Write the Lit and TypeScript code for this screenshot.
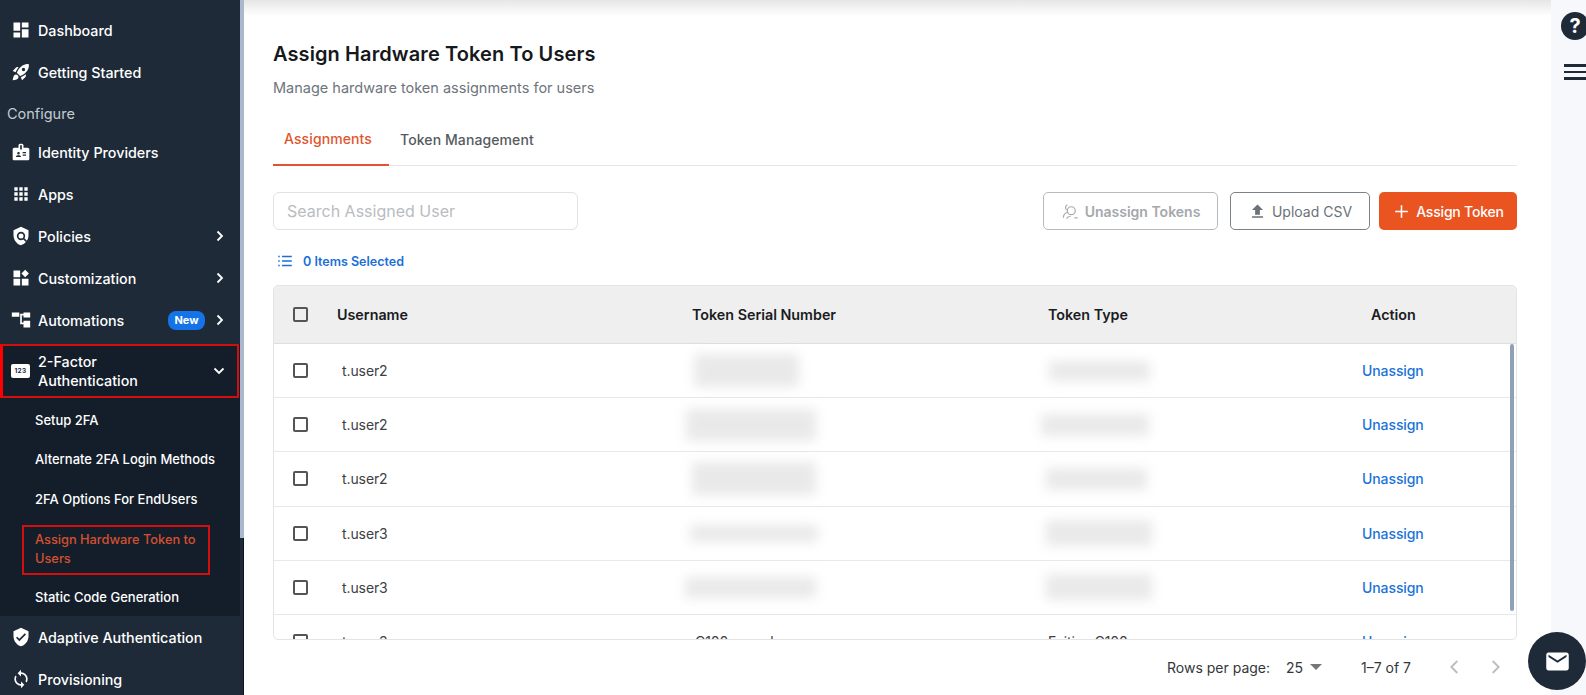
import { LitElement, html, css } from "lit";
import { customElement } from "lit/decorators.js";

const P: Record<string, string> = {
  dashboard: "M3 13h8V3H3v10zm0 8h8v-6H3v6zm10 0h8V11h-8v10zm0-18v6h8V3h-8z",
  rocket: "M9.19 6.35c-2.04 2.29-3.44 5.58-3.57 5.89L2 10.69l4.05-4.05c.47-.47 1.15-.68 1.81-.55l1.33.26zM11.17 17s3.74-1.55 5.89-3.7c5.4-5.4 4.5-9.62 4.21-10.57-.95-.3-5.17-1.19-10.57 4.21C8.55 9.09 7 12.83 7 12.83L11.17 17zm6.48-2.19c-2.29 2.04-5.58 3.44-5.89 3.57L13.31 22l4.05-4.05c.47-.47.68-1.15.55-1.81l-.26-1.33zM9 18c0 .83-.34 1.58-.88 2.12C6.94 21.3 2 22 2 22s.7-4.94 1.88-6.12C4.42 15.34 5.17 15 6 15c1.66 0 3 1.34 3 3zm4-9c0-1.1.9-2 2-2s2 .9 2 2-.9 2-2 2-2-.9-2-2z",
  badge: "M20 7h-5V4c0-1.1-.9-2-2-2h-2c-1.1 0-2 .9-2 2v3H4c-1.1 0-2 .9-2 2v11c0 1.1.9 2 2 2h16c1.1 0 2-.9 2-2V9c0-1.1-.9-2-2-2zM9 12c.83 0 1.5.67 1.5 1.5S9.83 15 9 15s-1.5-.67-1.5-1.5S8.17 12 9 12zm3 6H6v-.75c0-1 2-1.5 3-1.5s3 .5 3 1.5V18zm1-9h-2V4h2v5zm5 7.5h-4V15h4v1.5zm0-3h-4V12h4v1.5z",
  apps: "M4 8h4V4H4v4zm6 12h4v-4h-4v4zm-6 0h4v-4H4v4zm0-6h4v-4H4v4zm6 0h4v-4h-4v4zm6-10v4h4V4h-4zm-6 4h4V4h-4v4zm6 6h4v-4h-4v4zm0 6h4v-4h-4v4z",
  policy: "M21 5l-9-4-9 4v6c0 5.55 3.84 10.74 9 12 2.3-.56 4.33-1.9 5.88-3.71l-3.12-3.12c-1.94 1.29-4.58 1.07-6.29-.64-1.95-1.95-1.95-5.12 0-7.07 1.95-1.95 5.12-1.95 7.07 0 1.71 1.71 1.92 4.35.64 6.29l2.9 2.9C20.29 15.69 21 13.38 21 11V5zM12 15a3 3 0 1 0 0-6 3 3 0 0 0 0 6z",
  custom: "M3 3h8v8H3zM3 13h8v8H3zM13 13h8v8h-8zM17 2l4.5 4.5L17 11l-4.5-4.5z",
  auto: "M1 3h9v5H1zM11 4.5h4V3h8v6h-8V6.500h-2V15h2v-2h8v8h-8v-4h-4z",
  shield: "M12 1L3 5v6c0 5.55 3.84 10.74 9 12 5.16-1.26 9-6.45 9-12V5l-9-4zm-2 16l-4-4 1.41-1.41L10 14.17l6.59-6.59L18 9l-8 8z",
  sync: "M12 4V1L8 5l4 4V6c3.31 0 6 2.69 6 6 0 1.01-.25 1.97-.7 2.8l1.46 1.46C19.54 15.03 20 13.57 20 12c0-4.42-3.58-8-8-8zm0 14c-3.31 0-6-2.69-6-6 0-1.01.25-1.97.7-2.8L5.24 7.74C4.46 8.97 4 10.43 4 12c0 4.42 3.58 8 8 8v3l4-4-4-4v3z",
};

const icon = (name: string) => html`<svg class="ico" viewBox="0 0 24 24" fill="#fff"><path d=${P[name]}></path></svg>`;
const chevR = html`<svg class="chev" viewBox="0 0 12 12" fill="none" stroke="#fff" stroke-width="1.8"><path d="M3.5 1.5 8 6l-4.500 4.500"></path></svg>`;
const chevD = html`<svg class="chev" viewBox="0 0 12 12" fill="none" stroke="#fff" stroke-width="1.8"><path d="M1.500 3.500 6 8l4.500-4.500"></path></svg>`;

interface Row { user: string; s: [number, number, number]; t: [number, number, number]; }
const rows: Row[] = [
  { user: "t.user2", s: [2, 105, 33], t: [1, 101, 20] },
  { user: "t.user2", s: [-6, 130, 32], t: [-7, 108, 22] },
  { user: "t.user2", s: [0, 124, 33], t: [-2, 101, 22] },
  { user: "t.user3", s: [-2, 128, 17], t: [-2, 106, 26] },
  { user: "t.user3", s: [-7, 131, 21], t: [-2, 106, 26] },
];

@customElement("app-root")
export class AppRoot extends LitElement {
  static styles = css`
    :host { display: block; width: 1586px; height: 695px; overflow: hidden; font-family: "Inter", "Noto Sans", sans-serif; background: #fff; position: relative; }
    * { box-sizing: border-box; }
    .page { display: grid; grid-template-columns: 244px 1fr 35px; height: 695px; }
    .side { background: #1e2a38; box-shadow: inset -1px 0 0 #0d131a; padding-top: 9px; overflow: hidden; color: #fff; position: relative; }
    .sthumb { position: absolute; right: 0; top: 0; width: 4px; height: 538px; background: #a9b8cd; }
    .item { height: 42px; width: 240px; display: flex; align-items: center; padding-left: 11px; padding-right: 14px; font-size: 14.3px; font-weight: 500; }
    .ico { width: 20px; height: 20px; flex: none; margin-right: 7px; }
    .chev { width: 12px; height: 12px; flex: none; margin-left: auto; }
    .label-cfg { height: 38px; display: flex; align-items: center; padding: 2px 0 0 7px; font-size: 14.5px; color: #c3cad2; }
    .new { background: #1473e6; color: #fff; font-size: 11px; font-weight: 700; height: 19px; width: 37px; border-radius: 8px; display: flex; align-items: center; justify-content: center; margin-left: auto; }
    .new + .chev { margin-left: 9px; }
    .group { background: #141e2b; margin-top: 3px; height: 272px; width: 240px; }
    .tfa { height: 54px; border: 2px solid #d40d0d; border-left: 3px solid #f00; margin-right: 1px; display: flex; align-items: center; padding-left: 8px; padding-right: 12px; font-size: 14.3px; font-weight: 500; line-height: 19px; }
    .chip { width: 19px; height: 14px; background: #fff; border-radius: 2px; color: #1e2a38; font-size: 6.5px; font-weight: 700; display: flex; align-items: center; justify-content: center; margin-right: 8px; flex: none; letter-spacing: 0.3px; }
    .subs { padding-top: 2px; }
    .sub { height: 39.5px; display: flex; align-items: center; padding-left: 35px; font-size: 13px; font-weight: 500; }
    .sub.on { height: 50px; width: 188px; margin: 6px 0 3px 22px; padding: 0 6px 1px 11px; border: 2px solid #d40d0d; color: #d5502f; line-height: 19px; font-size: 12.8px; }

    .main { padding: 0 34px 0 29px; background: linear-gradient(#e6e6e6, #fff 16px); display: flex; flex-direction: column; min-width: 0; }
    h1 { margin: 42px 0 0; font-size: 20px; line-height: 24px; font-weight: 600; color: #16181c; letter-spacing: 0.1px; }
    .subtitle { margin-top: 12px; font-size: 14.5px; line-height: 20px; color: #6e747c; }
    .tabs { margin-top: 18px; display: flex; height: 50px; border-bottom: 1px solid #e6e6e6; font-size: 14px; font-weight: 500; letter-spacing: 0.1px; }
    .tab { padding: 0 11px 4px; display: flex; align-items: center; color: #555a60; height: 50px; }
    .tab.on { color: #e0552e; border-bottom: 2px solid #e0552e; width: 116px; }
    .tools { margin-top: 26px; display: flex; align-items: center; gap: 13px; }
    .search { width: 305px; height: 38px; border: 1px solid #e2e2e2; border-radius: 6px; margin-right: auto; padding-left: 13px; display: flex; align-items: center; font-size: 16px; color: #b9bcc0; }
    .btn { height: 38px; border-radius: 5px; display: flex; align-items: center; justify-content: center; gap: 5px; font-size: 14px; font-weight: 500; flex: none; }
    .btn svg { width: 19px; height: 19px; flex: none; }
    .b1 { width: 175px; border: 1px solid #b7babd; color: #a5a8ac; font-weight: 600; margin-right: -1px; }
    .b2 { width: 140px; border: 1px solid #7b8288; color: #6b7278; margin-right: -4px; font-weight: 400; }
    .b3 { width: 138px; background: #ea5420; color: #fff; letter-spacing: -0.2px; }
    .sel { margin-top: 21px; height: 20px; padding-left: 3px; display: flex; align-items: center; gap: 9px; font-size: 12.5px; font-weight: 600; color: #1a6fd8; }
    .sel svg { width: 18px; height: 18px; }
    .table { margin-top: 14px; height: 355px; border: 1px solid #e4e4e4; border-radius: 5px; overflow: hidden; position: relative; }
    .tr { display: grid; grid-template-columns: 63px 355px 356px 1fr; align-items: center; }
    .thead { height: 58px; background: #efefef; border-bottom: 1px solid #dedede; font-size: 14.3px; font-weight: 600; color: #1a1c1f; }
    .tcell { display: flex; }
    .tt { width: 323px; flex: none; }
    .trow { height: 54.2px; border-bottom: 1px solid #e8e8e8; font-size: 14px; color: #3c4043; letter-spacing: -0.1px; }
    .cb { width: 15px; height: 15px; border: 2px solid #555; border-radius: 2px; margin-left: 19px; }
    .u { padding-left: 5px; }
    .blur { background: #e9e9e9; filter: blur(6px); flex: none; }
    .actcell { display: flex; align-items: center; }
    .un { color: #1a73d8; font-weight: 500; }
    .ft { width: 314px; flex: none; }
    .thumb { position: absolute; right: 2px; top: 58px; width: 4px; height: 267px; background: #8fa1b6; border-radius: 2px; }
    .pager { margin-top: 15px; height: 24px; display: flex; align-items: center; font-size: 14px; color: #33373b; padding-left: 894px; }
    .pager > * { flex: none; }
    .rp { width: 119px; }
    .n { width: 24px; }
    .tri { width: 0; height: 0; border-left: 6px solid transparent; border-right: 6px solid transparent; border-top: 6px solid #777; margin-right: 39px; }
    .rng { width: 85px; }
    .pager svg { width: 16px; height: 16px; }
    .pager svg + svg { margin-left: 26px; }

    .rail { background: #f7f8fb; position: relative; overflow: hidden; padding-top: 12px; padding-left: 10px; }
    .help { width: 28px; height: 28px; border-radius: 50%; background: #1e2a38; color: #fff; display: flex; align-items: center; justify-content: center; font-weight: 700; font-size: 20px; }
    .burger { margin-top: 24px; width: 24px; display: flex; flex-direction: column; gap: 4px; margin-left: 3px; }
    .burger i { height: 2.5px; background: #1e2a38; display: block; }
    .mail { position: absolute; left: 1528px; top: 632px; width: 58px; height: 58px; border-radius: 50%; background: #1e2a38; display: flex; align-items: center; justify-content: center; }
    .mail svg { width: 27px; height: 27px; }
  `;

  render() {
    return html`
      <div class="page">
        <nav class="side">
          <div class="sthumb"></div>
          <div class="item">${icon("dashboard")}Dashboard</div>
          <div class="item">${icon("rocket")}Getting Started</div>
          <div class="label-cfg">Configure</div>
          <div class="item">${icon("badge")}Identity Providers</div>
          <div class="item">${icon("apps")}Apps</div>
          <div class="item">${icon("policy")}Policies${chevR}</div>
          <div class="item">${icon("custom")}Customization${chevR}</div>
          <div class="item">${icon("auto")}Automations<span class="new">New</span>${chevR}</div>
          <div class="group">
            <div class="tfa"><span class="chip">123</span><span>2-Factor<br />Authentication</span>${chevD}</div>
            <div class="subs">
              <div class="sub">Setup 2FA</div>
              <div class="sub">Alternate 2FA Login Methods</div>
              <div class="sub">2FA Options For EndUsers</div>
              <div class="sub on">Assign Hardware Token to Users</div>
              <div class="sub">Static Code Generation</div>
            </div>
          </div>
          <div class="item">${icon("shield")}Adaptive Authentication</div>
          <div class="item">${icon("sync")}Provisioning</div>
        </nav>

        <main class="main">
          <h1>Assign Hardware Token To Users</h1>
          <div class="subtitle">Manage hardware token assignments for users</div>
          <div class="tabs">
            <div class="tab on">Assignments</div>
            <div class="tab">Token Management</div>
          </div>
          <div class="tools">
            <div class="search">Search Assigned User</div>
            <div class="btn b1">
              <svg viewBox="0 0 24 24" fill="none" stroke="#a5a8ac" stroke-width="1.500"><circle cx="13" cy="11" r="5"></circle><path d="M8 3.500a4 4 0 0 0-1 6.500M3 20c0-4 2-6 5-7M7 21c1-2 3-3 5-3M17 20h4"></path></svg>
              Unassign Tokens
            </div>
            <div class="btn b2">
              <svg viewBox="0 0 24 24" fill="#6b7278"><path d="M9 16h6v-6h4l-7-7-7 7h4zM5 18h14v2H5z"></path></svg>
              Upload CSV
            </div>
            <div class="btn b3">
              <svg viewBox="0 0 24 24" fill="none" stroke="#fff" stroke-width="2"><path d="M12 4v16M4 12h16"></path></svg>
              Assign Token
            </div>
          </div>
          <div class="sel">
            <svg viewBox="0 0 24 24" fill="none" stroke="#1a6fd8" stroke-width="2"><path d="M8 6h13M8 12h13M8 18h13M3 6h2M3 12h2M3 18h2"></path></svg>
            0 Items Selected
          </div>
          <div class="table">
            <div class="tr thead">
              <div class="cb"></div>
              <div>Username</div>
              <div>Token Serial Number</div>
              <div class="tcell"><span class="tt">Token Type</span><span>Action</span></div>
            </div>
            ${rows.map(
              (r) => html`
                <div class="tr trow">
                  <div class="cb"></div>
                  <div class="u">${r.user}</div>
                  <div><div class="blur" style="margin-left:${r.s[0]}px;width:${r.s[1]}px;height:${r.s[2]}px"></div></div>
                  <div class="actcell"><div class="blur" style="margin-left:${r.t[0]}px;width:${r.t[1]}px;height:${r.t[2]}px;margin-right:${314 - r.t[0] - r.t[1]}px"></div><span class="un">Unassign</span></div>
                </div>
              `
            )}
            <div class="tr trow">
              <div class="cb"></div>
              <div class="u">t.user3</div>
              <div style="padding-left:3px">C100-sample</div>
              <div class="actcell"><span class="ft">Feitian C100</span><span class="un">Unassign</span></div>
            </div>
            <div class="thumb"></div>
          </div>
          <div class="pager">
            <span class="rp">Rows per page:</span>
            <span class="n">25</span>
            <span class="tri"></span>
            <span class="rng">1–7 of 7</span>
            <svg viewBox="0 0 12 12" fill="none" stroke="#bdbdbd" stroke-width="1.400"><path d="M8.500 1.500 4 6l4.500 4.500"></path></svg>
            <svg viewBox="0 0 12 12" fill="none" stroke="#bdbdbd" stroke-width="1.400"><path d="M3.500 1.500 8 6l-4.500 4.500"></path></svg>
          </div>
        </main>

        <aside class="rail">
          <div class="help">?</div>
          <div class="burger"><i></i><i></i><i></i></div>
        </aside>
      </div>
      <div class="mail">
        <svg viewBox="0 0 24 24" fill="#fff"><path d="M20 4H4c-1.100 0-2 .9-2 2v12c0 1.100.9 2 2 2h16c1.100 0 2-.9 2-2V6c0-1.100-.9-2-2-2zm0 4-8 5-8-5V6l8 5 8-5v2z"></path></svg>
      </div>
    `;
  }
}
